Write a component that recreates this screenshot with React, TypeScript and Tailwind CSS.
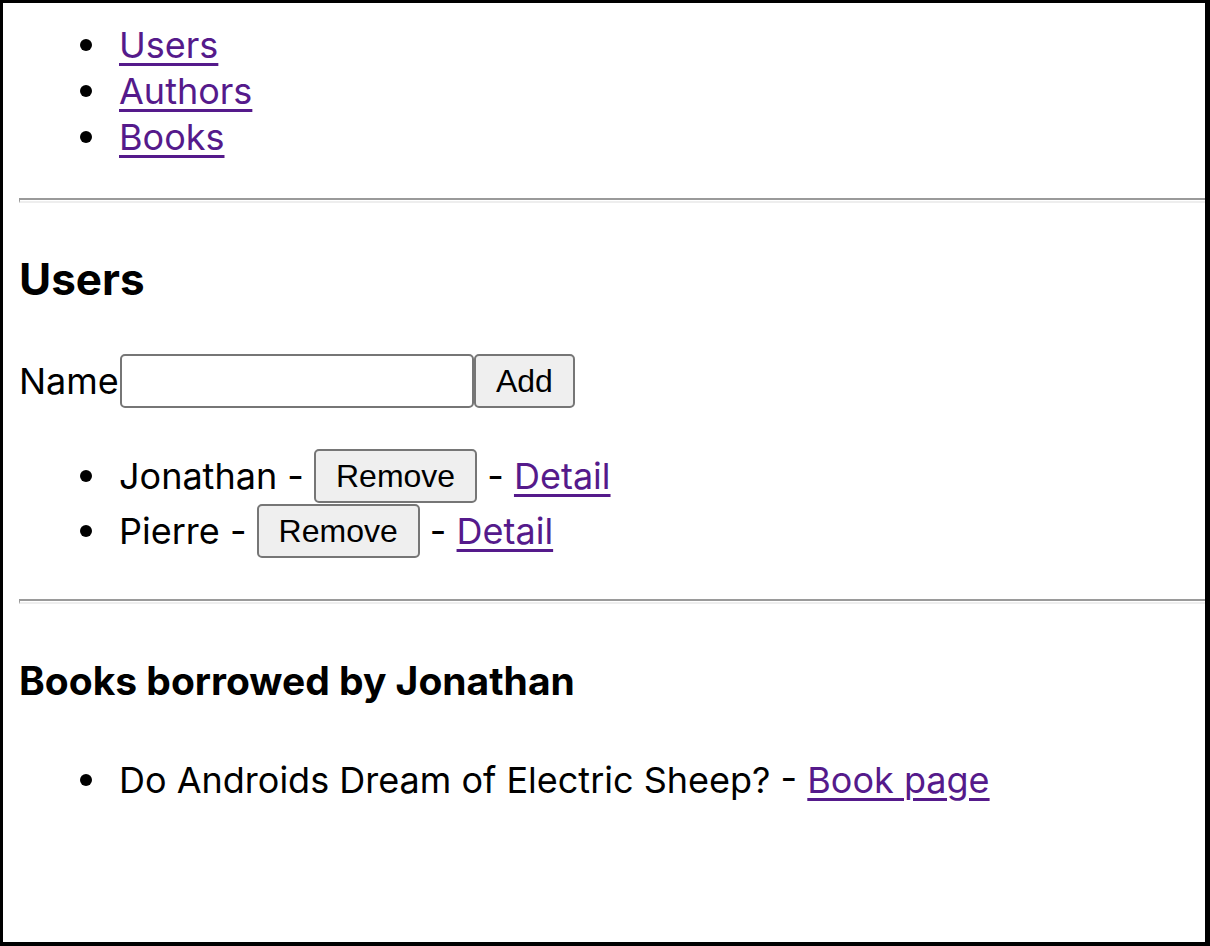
import React from "react";

const linkCls =
  "text-[#551a8b] underline decoration-[3px] underline-offset-[5px]";

const btnCls =
  "h-[54px] px-5 rounded-[5px] border-2 border-[#767676] bg-[#efefef] text-black text-[32px] leading-none align-middle font-['Liberation_Sans',Arial,sans-serif]";

const users = ["Jonathan", "Pierre"];

const Bullet = () => (
  <span className="inline-block shrink-0 w-3 h-3 mr-[27px] rounded-full bg-black" />
);

export default function App() {
  return (
    <div className="w-[1210px] h-[946px] overflow-hidden border-l-[3px] border-t-[3px] border-r-[5px] border-b-[4px] border-black bg-white text-black font-['Inter',sans-serif] text-[36px]">
      <div className="pl-4 pt-[19px]">
        {/* nav */}
        <ul className="pl-[61px] leading-[46px]">
          {["Users", "Authors", "Books"].map((l) => (
            <li key={l} className="flex items-center">
              <Bullet />
              <a href="#" className={linkCls}>{l}</a>
            </li>
          ))}
        </ul>

        <hr className="mt-[38px] w-[1200px] h-[5px] border-t-2 border-b-2 border-l border-t-[#9a9a9a] border-l-[#9a9a9a] border-b-[#eeeeee]" />

        <h2 className="mt-[51px] text-[44px] font-bold leading-[50px]">Users</h2>

        <div className="mt-[50px] flex items-center h-[54px]">
          <span>Name</span>
          <input className="ml-px w-[354px] h-[54px] rounded-[5px] border-2 border-[#767676] bg-white" />
          <button className={btnCls}>Add</button>
        </div>

        <ul className="mt-[40px] pl-[61px]">
          {users.map((u) => (
            <li key={u} className="flex items-center h-[55px] whitespace-pre">
              <Bullet />
              <span>{u} - </span>
              <button className={btnCls}>Remove</button>
              <span> - </span>
              <a href="#" className={linkCls}>Detail</a>
            </li>
          ))}
        </ul>

        <hr className="mt-[41px] w-[1200px] h-[5px] border-t-2 border-b-2 border-l border-t-[#9a9a9a] border-l-[#9a9a9a] border-b-[#eeeeee]" />

        <h3 className="mt-[55px] text-[39px] font-bold leading-[44px]">
          Books borrowed by Jonathan
        </h3>

        <ul className="mt-[54px] pl-[61px] leading-[46px]">
          <li className="flex items-center whitespace-pre">
            <Bullet />
            <span>Do Androids Dream of Electric Sheep? - </span>
            <a href="#" className={linkCls}>Book page</a>
          </li>
        </ul>
      </div>
    </div>
  );
}
